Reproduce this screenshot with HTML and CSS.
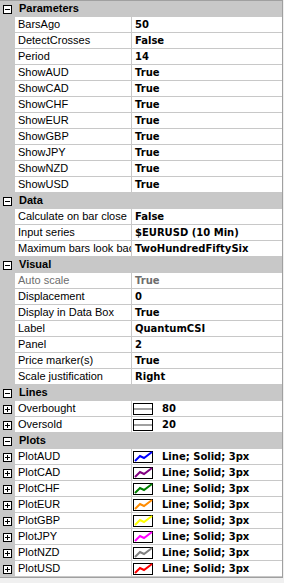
FILE: index.html
```html
<!doctype html>
<html lang="en">
<head>
    <meta charset="UTF-8">
    <link rel="stylesheet" href="styles.css">
    <title>Indicator properties</title>
</head>
<body>
<div class="grid">

    <div class="row cat"><div class="gutter"><span class="box minus"></span></div><div class="label">Parameters</div></div>
    <div class="row"><div class="gutter"></div><div class="name">BarsAgo</div><div class="value">50</div></div>
    <div class="row"><div class="gutter"></div><div class="name">DetectCrosses</div><div class="value">False</div></div>
    <div class="row"><div class="gutter"></div><div class="name">Period</div><div class="value">14</div></div>
    <div class="row"><div class="gutter"></div><div class="name">ShowAUD</div><div class="value">True</div></div>
    <div class="row"><div class="gutter"></div><div class="name">ShowCAD</div><div class="value">True</div></div>
    <div class="row"><div class="gutter"></div><div class="name">ShowCHF</div><div class="value">True</div></div>
    <div class="row"><div class="gutter"></div><div class="name">ShowEUR</div><div class="value">True</div></div>
    <div class="row"><div class="gutter"></div><div class="name">ShowGBP</div><div class="value">True</div></div>
    <div class="row"><div class="gutter"></div><div class="name">ShowJPY</div><div class="value">True</div></div>
    <div class="row"><div class="gutter"></div><div class="name">ShowNZD</div><div class="value">True</div></div>
    <div class="row"><div class="gutter"></div><div class="name">ShowUSD</div><div class="value">True</div></div>

    <div class="row cat"><div class="gutter"><span class="box minus"></span></div><div class="label">Data</div></div>
    <div class="row"><div class="gutter"></div><div class="name">Calculate on bar close</div><div class="value">False</div></div>
    <div class="row"><div class="gutter"></div><div class="name">Input series</div><div class="value">$EURUSD (10 Min)</div></div>
    <div class="row"><div class="gutter"></div><div class="name">Maximum bars look back</div><div class="value">TwoHundredFiftySix</div></div>

    <div class="row cat"><div class="gutter"><span class="box minus"></span></div><div class="label">Visual</div></div>
    <div class="row disabled"><div class="gutter"></div><div class="name">Auto scale</div><div class="value">True</div></div>
    <div class="row"><div class="gutter"></div><div class="name">Displacement</div><div class="value">0</div></div>
    <div class="row"><div class="gutter"></div><div class="name">Display in Data Box</div><div class="value">True</div></div>
    <div class="row"><div class="gutter"></div><div class="name">Label</div><div class="value">QuantumCSI</div></div>
    <div class="row"><div class="gutter"></div><div class="name">Panel</div><div class="value">2</div></div>
    <div class="row"><div class="gutter"></div><div class="name">Price marker(s)</div><div class="value">True</div></div>
    <div class="row"><div class="gutter"></div><div class="name">Scale justification</div><div class="value">Right</div></div>

    <div class="row cat"><div class="gutter"><span class="box minus"></span></div><div class="label">Lines</div></div>
    <div class="row"><div class="gutter"><span class="box plus"></span></div><div class="name">Overbought</div>
        <div class="value swatch"><svg width="20" height="12" viewBox="0 0 20 12"><rect x="0.5" y="0.5" width="19" height="11" fill="#fff" stroke="#000"/><path d="M1 6H19" stroke="#a0a0a0" stroke-width="2"/></svg>80</div></div>
    <div class="row"><div class="gutter"><span class="box plus"></span></div><div class="name">Oversold</div>
        <div class="value swatch"><svg width="20" height="12" viewBox="0 0 20 12"><rect x="0.5" y="0.5" width="19" height="11" fill="#fff" stroke="#000"/><path d="M1 6H19" stroke="#a0a0a0" stroke-width="2"/></svg>20</div></div>

    <div class="row cat"><div class="gutter"><span class="box minus"></span></div><div class="label">Plots</div></div>
    <div class="row"><div class="gutter"><span class="box plus"></span></div><div class="name">PlotAUD</div>
        <div class="value swatch"><svg width="20" height="12" viewBox="0 0 20 12"><rect x="0.5" y="0.5" width="19" height="11" fill="#fff" stroke="#000"/><polyline points="2,10 7,5 11,7 19,1" fill="none" stroke="#0000ff" stroke-width="2"/></svg>Line; Solid; 3px</div></div>
    <div class="row"><div class="gutter"><span class="box plus"></span></div><div class="name">PlotCAD</div>
        <div class="value swatch"><svg width="20" height="12" viewBox="0 0 20 12"><rect x="0.5" y="0.5" width="19" height="11" fill="#fff" stroke="#000"/><polyline points="2,10 7,5 11,7 19,1" fill="none" stroke="#800080" stroke-width="2"/></svg>Line; Solid; 3px</div></div>
    <div class="row"><div class="gutter"><span class="box plus"></span></div><div class="name">PlotCHF</div>
        <div class="value swatch"><svg width="20" height="12" viewBox="0 0 20 12"><rect x="0.5" y="0.5" width="19" height="11" fill="#fff" stroke="#000"/><polyline points="2,10 7,5 11,7 19,1" fill="none" stroke="#008000" stroke-width="2"/></svg>Line; Solid; 3px</div></div>
    <div class="row"><div class="gutter"><span class="box plus"></span></div><div class="name">PlotEUR</div>
        <div class="value swatch"><svg width="20" height="12" viewBox="0 0 20 12"><rect x="0.5" y="0.5" width="19" height="11" fill="#fff" stroke="#000"/><polyline points="2,10 7,5 11,7 19,1" fill="none" stroke="#ff8c00" stroke-width="2"/></svg>Line; Solid; 3px</div></div>
    <div class="row"><div class="gutter"><span class="box plus"></span></div><div class="name">PlotGBP</div>
        <div class="value swatch"><svg width="20" height="12" viewBox="0 0 20 12"><rect x="0.5" y="0.5" width="19" height="11" fill="#fff" stroke="#000"/><polyline points="2,10 7,5 11,7 19,1" fill="none" stroke="#ffff00" stroke-width="2"/></svg>Line; Solid; 3px</div></div>
    <div class="row"><div class="gutter"><span class="box plus"></span></div><div class="name">PlotJPY</div>
        <div class="value swatch"><svg width="20" height="12" viewBox="0 0 20 12"><rect x="0.5" y="0.5" width="19" height="11" fill="#fff" stroke="#000"/><polyline points="2,10 7,5 11,7 19,1" fill="none" stroke="#ff00ff" stroke-width="2"/></svg>Line; Solid; 3px</div></div>
    <div class="row"><div class="gutter"><span class="box plus"></span></div><div class="name">PlotNZD</div>
        <div class="value swatch"><svg width="20" height="12" viewBox="0 0 20 12"><rect x="0.5" y="0.5" width="19" height="11" fill="#fff" stroke="#000"/><polyline points="2,10 7,5 11,7 19,1" fill="none" stroke="#808080" stroke-width="2"/></svg>Line; Solid; 3px</div></div>
    <div class="row"><div class="gutter"><span class="box plus"></span></div><div class="name">PlotUSD</div>
        <div class="value swatch"><svg width="20" height="12" viewBox="0 0 20 12"><rect x="0.5" y="0.5" width="19" height="11" fill="#fff" stroke="#000"/><polyline points="2,10 7,5 11,7 19,1" fill="none" stroke="#ff0000" stroke-width="2"/></svg>Line; Solid; 3px</div></div>

</div>
</body>
</html>
```

FILE: styles.css
```css
body {
    margin: 0;
    background: #f0f0f0;
    font: 11px "Liberation Sans", Arial, sans-serif;
    color: #000;
}

.grid {
    width: 283px;
    box-sizing: border-box;
    background: #fff;
    border-top: 1px solid #a0a0a0;
    border-right: 1px solid #a0a0a0;
    border-bottom: 1px solid #a0a0a0;
}

.row {
    display: flex;
    height: 16px;
    line-height: 15px;
}

.row .gutter {
    width: 15px;
    flex: none;
    background: #c8c8c8;
    display: flex;
    align-items: center;
    justify-content: center;
}

.row .name {
    width: 117px;
    flex: none;
    box-sizing: border-box;
    padding-left: 3px;
    border-right: 1px solid #c8c8c8;
    border-bottom: 1px solid #c8c8c8;
    white-space: nowrap;
    overflow: hidden;
}

.row .value {
    flex: 1;
    padding-left: 3px;
    border-bottom: 1px solid #c8c8c8;
    font: bold 10px "DejaVu Sans", sans-serif;
    line-height: 15px;
    white-space: nowrap;
    overflow: hidden;
}

.row.disabled .name,
.row.disabled .value {
    color: #6d6d6d;
}

.row.cat {
    background: #c8c8c8;
}
.row.cat .label {
    padding-left: 4px;
    font-weight: bold;
}

.value.swatch {
    display: flex;
    align-items: center;
    gap: 9px;
    padding-left: 1px;
}
.value.swatch svg {
    flex: none;
}

.box {
    width: 9px;
    height: 9px;
    box-sizing: border-box;
    border: 1px solid #000;
}
.box.minus {
    background: #fff linear-gradient(#000, #000) center / 5px 1px no-repeat;
}
.box.plus {
    background:
        linear-gradient(#000, #000) center / 5px 1px no-repeat,
        linear-gradient(#000, #000) center / 1px 5px no-repeat,
        #fff;
}
```
